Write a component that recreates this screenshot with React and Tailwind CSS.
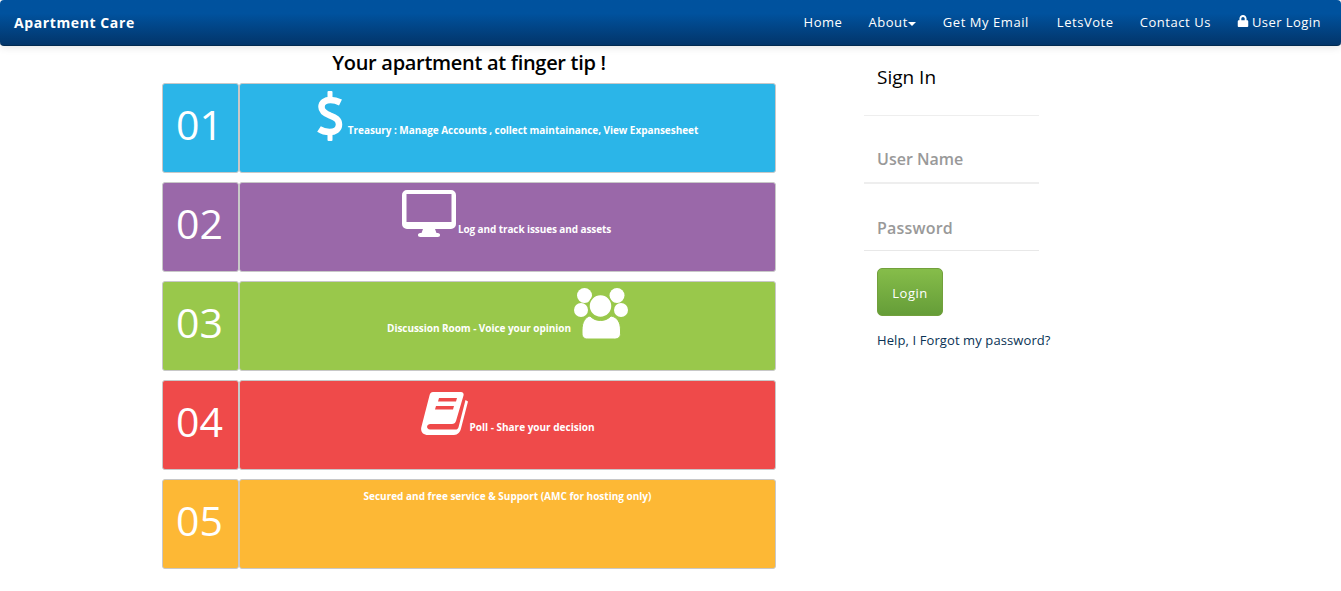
import React from "react";
import { FaLock } from "react-icons/fa";

const Dollar = () => (
  <svg width="28" height="50" viewBox="0 0 28 50" fill="none" className="shrink-0">
    <path d="M24.500 11.500C21.500 10 18 9 14.500 9 9 9 5.500 11.500 5.500 16c0 4.500 3.500 6.500 8.500 8.500 5.500 2 9 4 9 9 0 5-4 7.500-9.500 7.500C9.500 41 6 40 3 38" stroke="white" strokeWidth="6.500" />
    <rect x="11.500" y="0" width="5" height="10" rx="1" fill="white" />
    <rect x="11.500" y="40" width="5" height="10" rx="1" fill="white" />
  </svg>
);

const Monitor = () => (
  <svg width="54" height="47" viewBox="0 0 54 47" className="shrink-0">
    <path fillRule="evenodd" clipRule="evenodd" d="M5 0h44a5 5 0 0 1 5 5v29a5 5 0 0 1-5 5H5a5 5 0 0 1-5-5V5a5 5 0 0 1 5-5zM4.500 4v28h45V4zM21 39h12l1.500 4h1c2 0 2.500 1 2.500 2s-.5 2-2.500 2h-17c-2 0-2.500-1-2.500-2s.5-2 2.500-2h1z" fill="white" />
  </svg>
);

const People = () => (
  <svg width="54" height="51" viewBox="0 0 54 51" className="shrink-0">
    <g fill="white">
      <circle cx="10.500" cy="7.500" r="7.500" />
      <circle cx="43" cy="7.500" r="7.500" />
      <circle cx="7" cy="22" r="7" />
      <circle cx="47" cy="22" r="7" />
      <path d="M16 28c3 3 6 4.500 10.500 4.500s7.500-1.500 10.500-4.500c6 1 9.500 6 9.500 14v3c0 4-2 6-6 6H14c-4 0-6-2-6-6v-3c0-8 3.500-13 8-14z" stroke="#99c84b" strokeWidth="1" />
      <circle cx="26.500" cy="18" r="11.500" stroke="#99c84b" strokeWidth="1.500" />
    </g>
  </svg>
);

const Book = () => (
  <svg width="47" height="43" viewBox="0 0 47 43" className="shrink-0">
    <path fillRule="evenodd" clipRule="evenodd" fill="white" d="M12 0h28c2 0 3 1.500 2.500 3.500L35 29c-.6 2-2 3-4 3H9.500c-4.500 0-4.500 5.500-.5 5.500h25.500c1.500 0 2.500-.8 3-2.300L44.500 8l2.500 1.500-7 27c-.8 3.500-3.200 6.500-7 6.500H7c-5 0-8-3.500-6.500-8.500L8.500 3.500C9 1.500 10 0 12 0zM18 6l-1 3.500h18L36 6zM15 14l-1 3.500h18L33 14z" />
  </svg>
);

const rows = [
  { n: "01", color: "bg-[#2bb5e8]", content: <div className="flex items-end justify-center pt-[7px] pr-[1px]"><Dollar /><span className="mb-[3px] ml-[4px] tracking-[-0.05px]">Treasury : Manage Accounts , collect maintainance, View Expansesheet</span></div> },
  { n: "02", color: "bg-[#9a68a9]", content: <div className="flex items-end justify-center pt-[7px] pr-[2px]"><Monitor /><span className="mb-[0px] ml-[2px] tracking-[-0.1px]">Log and track issues and assets</span></div> },
  { n: "03", color: "bg-[#99c84b]", content: <div className="flex items-end justify-center pt-[6px]"><span className="mb-[3px] mr-[3px] tracking-[-0.05px]">Discussion Room  - Voice your opinion</span><People /></div> },
  { n: "04", color: "bg-[#ef4a4a]", content: <div className="flex items-end justify-center pt-[11px]"><Book /><span className="mb-[0px] ml-[2px]">Poll - Share your decision</span></div> },
  { n: "05", color: "bg-[#fdb835]", content: <div className="pt-[9px] text-center">Secured and free service &amp; Support (AMC for hosting only)</div> },
];

export default function App() {
  return (
    <div className="min-h-[591px] bg-white text-black font-['Open_Sans',sans-serif]">
      <nav className="h-[46px] rounded-[4px] border-b border-[#012a50] bg-gradient-to-b from-[#00529e] from-30% to-[#02356a] shadow-[0_1px_8px_rgba(0,0,0,0.12)] flex items-center justify-between pl-[14px] pr-[20px] text-white">
        <span className="text-[14px] font-bold tracking-[0.6px]">Apartment Care</span>
        <ul className="flex items-center text-[13px] tracking-[0.55px]">
          <li className="mr-[26px]">Home</li>
          <li className="mr-[27px] flex items-center">About<span className="mt-[2px] border-x-[4px] border-t-[4px] border-x-transparent border-t-white" /></li>
          <li className="mr-[28px]">Get My Email</li>
          <li className="mr-[26px]">LetsVote</li>
          <li className="mr-[26px]">Contact Us</li>
          <li className="flex items-center"><FaLock className="mr-[3px] text-[12px] -mt-[3px]" /><span className="tracking-[0.45px]">User Login</span></li>
        </ul>
      </nav>
      <div className="flex pl-[162px]">
        <main className="w-[614px]">
          <h1 className="text-[20px] leading-[28px] font-semibold tracking-[-0.3px] text-center mt-[3px] mb-[6px]">Your apartment at finger tip !</h1>
          <div className="flex flex-col gap-[9px]">
            {rows.map((r) => (
              <div key={r.n} className="flex h-[90px]">
                <div className={`${r.color} w-[77px] rounded-[3px] border border-[#c8c8c8] flex items-center justify-center pb-[7px] pr-[2px] text-[41px] text-white`}>{r.n}</div>
                <div className={`${r.color} flex-1 rounded-[3px] border border-[#c8c8c8] text-white text-[10px] font-bold`}>{r.content}</div>
              </div>
            ))}
          </div>
        </main>
        <aside className="ml-[88px] w-[175px]">
          <h2 className="text-[19px] leading-[28px] pl-[13px] pt-[17px] pb-[24px] border-b border-[#eeeeee]">Sign In</h2>
          <div className="h-[68px] border-b-2 border-[#eeeeee] pl-[13px] pt-[31px] text-[16px] leading-[24px] font-semibold text-[#999999]">User Name</div>
          <div className="h-[67px] border-b border-[#e8e8e8] pl-[13px] pt-[32px] text-[16px] leading-[24px] font-semibold tracking-[0.2px] text-[#999999]">Password</div>
          <button className="ml-[13px] mt-[17px] block w-[66px] h-[48px] pt-[3px] rounded-[5px] border border-[#72a03c] bg-gradient-to-b from-[#86bd4a] to-[#659d38] text-white text-[13px] tracking-[0.5px]">Login</button>
          <p className="ml-[13px] mt-[15px] whitespace-nowrap text-[13px] leading-[18px] tracking-[0.1px] text-[#0a3355]">Help, I Forgot my password?</p>
        </aside>
      </div>
    </div>
  );
}
